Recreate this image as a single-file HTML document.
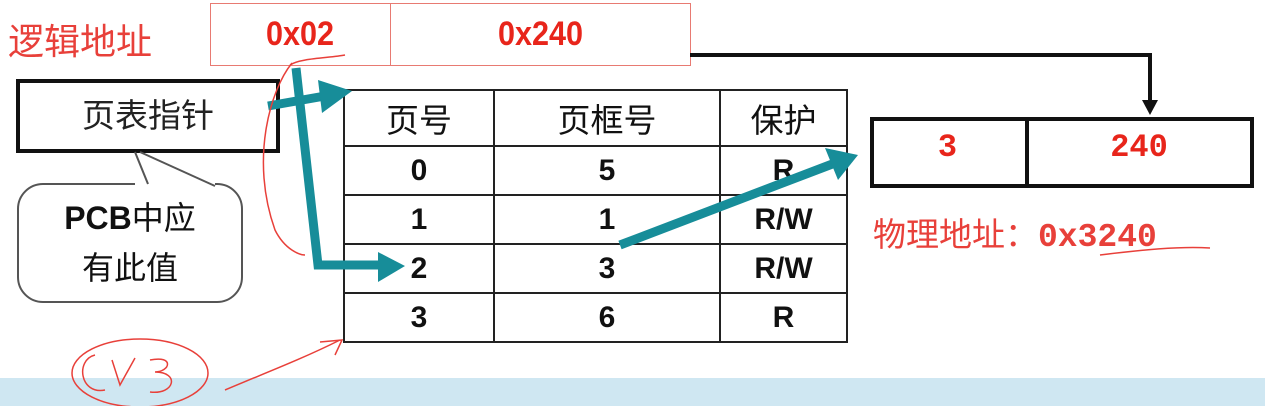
<!DOCTYPE html>
<html><head><meta charset="utf-8"><style>
body{margin:0;width:1265px;height:406px;background:#fff;position:relative;overflow:hidden;font-family:"Liberation Sans","Noto Sans CJK SC",sans-serif}
.a{position:absolute}
.red{color:#e8251b}
table{border-collapse:collapse;position:absolute;left:343px;top:89px;width:505px}
td{border:2px solid #222;text-align:center;font-weight:bold;font-size:30px;height:47px;padding:0;color:#111}
tr.h td{height:54px;font-weight:normal;font-size:33px}
</style></head><body>
<div class="a" style="left:0;top:378px;width:1265px;height:28px;background:#cfe7f2"></div>
<div class="a red" style="left:8px;top:13px;font-size:36px;color:#e8403a">逻辑地址</div>
<div class="a" style="left:210px;top:3px;width:479px;height:61px;border:1px solid #e87a72"></div>
<div class="a" style="left:390px;top:3px;width:1px;height:62px;background:#e87a72"></div>
<div class="a red" style="left:210px;top:15px;width:180px;text-align:center;font-size:34px;font-weight:bold;transform:scaleX(0.9)">0x02</div>
<div class="a red" style="left:391px;top:15px;width:299px;text-align:center;font-size:34px;font-weight:bold;transform:scaleX(0.9)">0x240</div>
<div class="a" style="left:16px;top:79px;width:256px;height:66px;border:4px solid #111;font-size:33px;text-align:center;line-height:66px;color:#222">页表指针</div>
<div class="a" style="left:17px;top:183px;width:226px;height:120px;border:2px solid #555;border-radius:26px;font-size:32px;text-align:center;line-height:50px;padding-top:8px;box-sizing:border-box;color:#111"><b>PCB</b>中应<br>有此值</div>
<table>
<tr class="h"><td style="width:148px">页号</td><td style="width:224px">页框号</td><td>保护</td></tr>
<tr><td>0</td><td>5</td><td>R</td></tr>
<tr><td>1</td><td>1</td><td>R/W</td></tr>
<tr><td>2</td><td>3</td><td>R/W</td></tr>
<tr><td>3</td><td>6</td><td>R</td></tr>
</table>
<div class="a" style="left:870px;top:117px;width:376px;height:63px;border:4px solid #111"></div>
<div class="a" style="left:1025px;top:117px;width:4px;height:70px;background:#111"></div>
<div class="a red" style="left:870px;top:129px;width:155px;text-align:center;font-family:'Liberation Mono',monospace;font-size:32px;font-weight:bold">3</div>
<div class="a red" style="left:1029px;top:129px;width:220px;text-align:center;font-family:'Liberation Mono',monospace;font-size:32px;font-weight:bold">240</div>
<div class="a red" style="left:873px;top:208px;font-size:33px;color:#e8403a">物理地址：<span style="font-family:'Liberation Mono',monospace;font-weight:bold">0x3240</span></div>
<svg class="a" style="left:0;top:0" width="1265" height="406">
<polyline points="690,55 1150,55 1150,103" fill="none" stroke="#111" stroke-width="4"/>
<polygon points="1142,100 1158,100 1150,115" fill="#111"/>
<rect x="135" y="178" width="80" height="8" fill="#fff"/>
<polyline points="135,152 148,184" stroke="#555" stroke-width="2" fill="none"/>
<polyline points="140,152 215,186" stroke="#555" stroke-width="2" fill="none"/>
<g stroke="#178d99" stroke-width="9" fill="none">
<line x1="268" y1="106" x2="325" y2="96"/>
<polyline points="296,68 318,265 380,265"/>
<line x1="620" y1="245" x2="835" y2="163"/>
</g>
<g fill="#178d99">
<polygon points="318,80 352,91 322,113"/>
<polygon points="378,252 405,266 378,282"/>
<polygon points="825,148 858,155 838,180"/>
</g>
<g stroke="#e8403a" stroke-width="1.5" fill="none">
<path d="M292,63 C270,90 250,160 275,230 C285,250 300,255 305,255"/>
<path d="M290,65 C300,58 330,58 345,55"/>
<path d="M225,390 C260,375 300,360 340,340"/>
<path d="M320,342 L342,340 L335,355"/>
<ellipse cx="140" cy="373" rx="68" ry="34"/>
<path d="M95,355 C75,360 80,395 105,390 M112,360 L120,385 L135,358 M150,360 C175,355 170,372 155,372 C180,372 175,395 150,392"/>
<path d="M1100,255 C1140,250 1180,246 1210,248"/>
</g>
</svg>
</body></html>
